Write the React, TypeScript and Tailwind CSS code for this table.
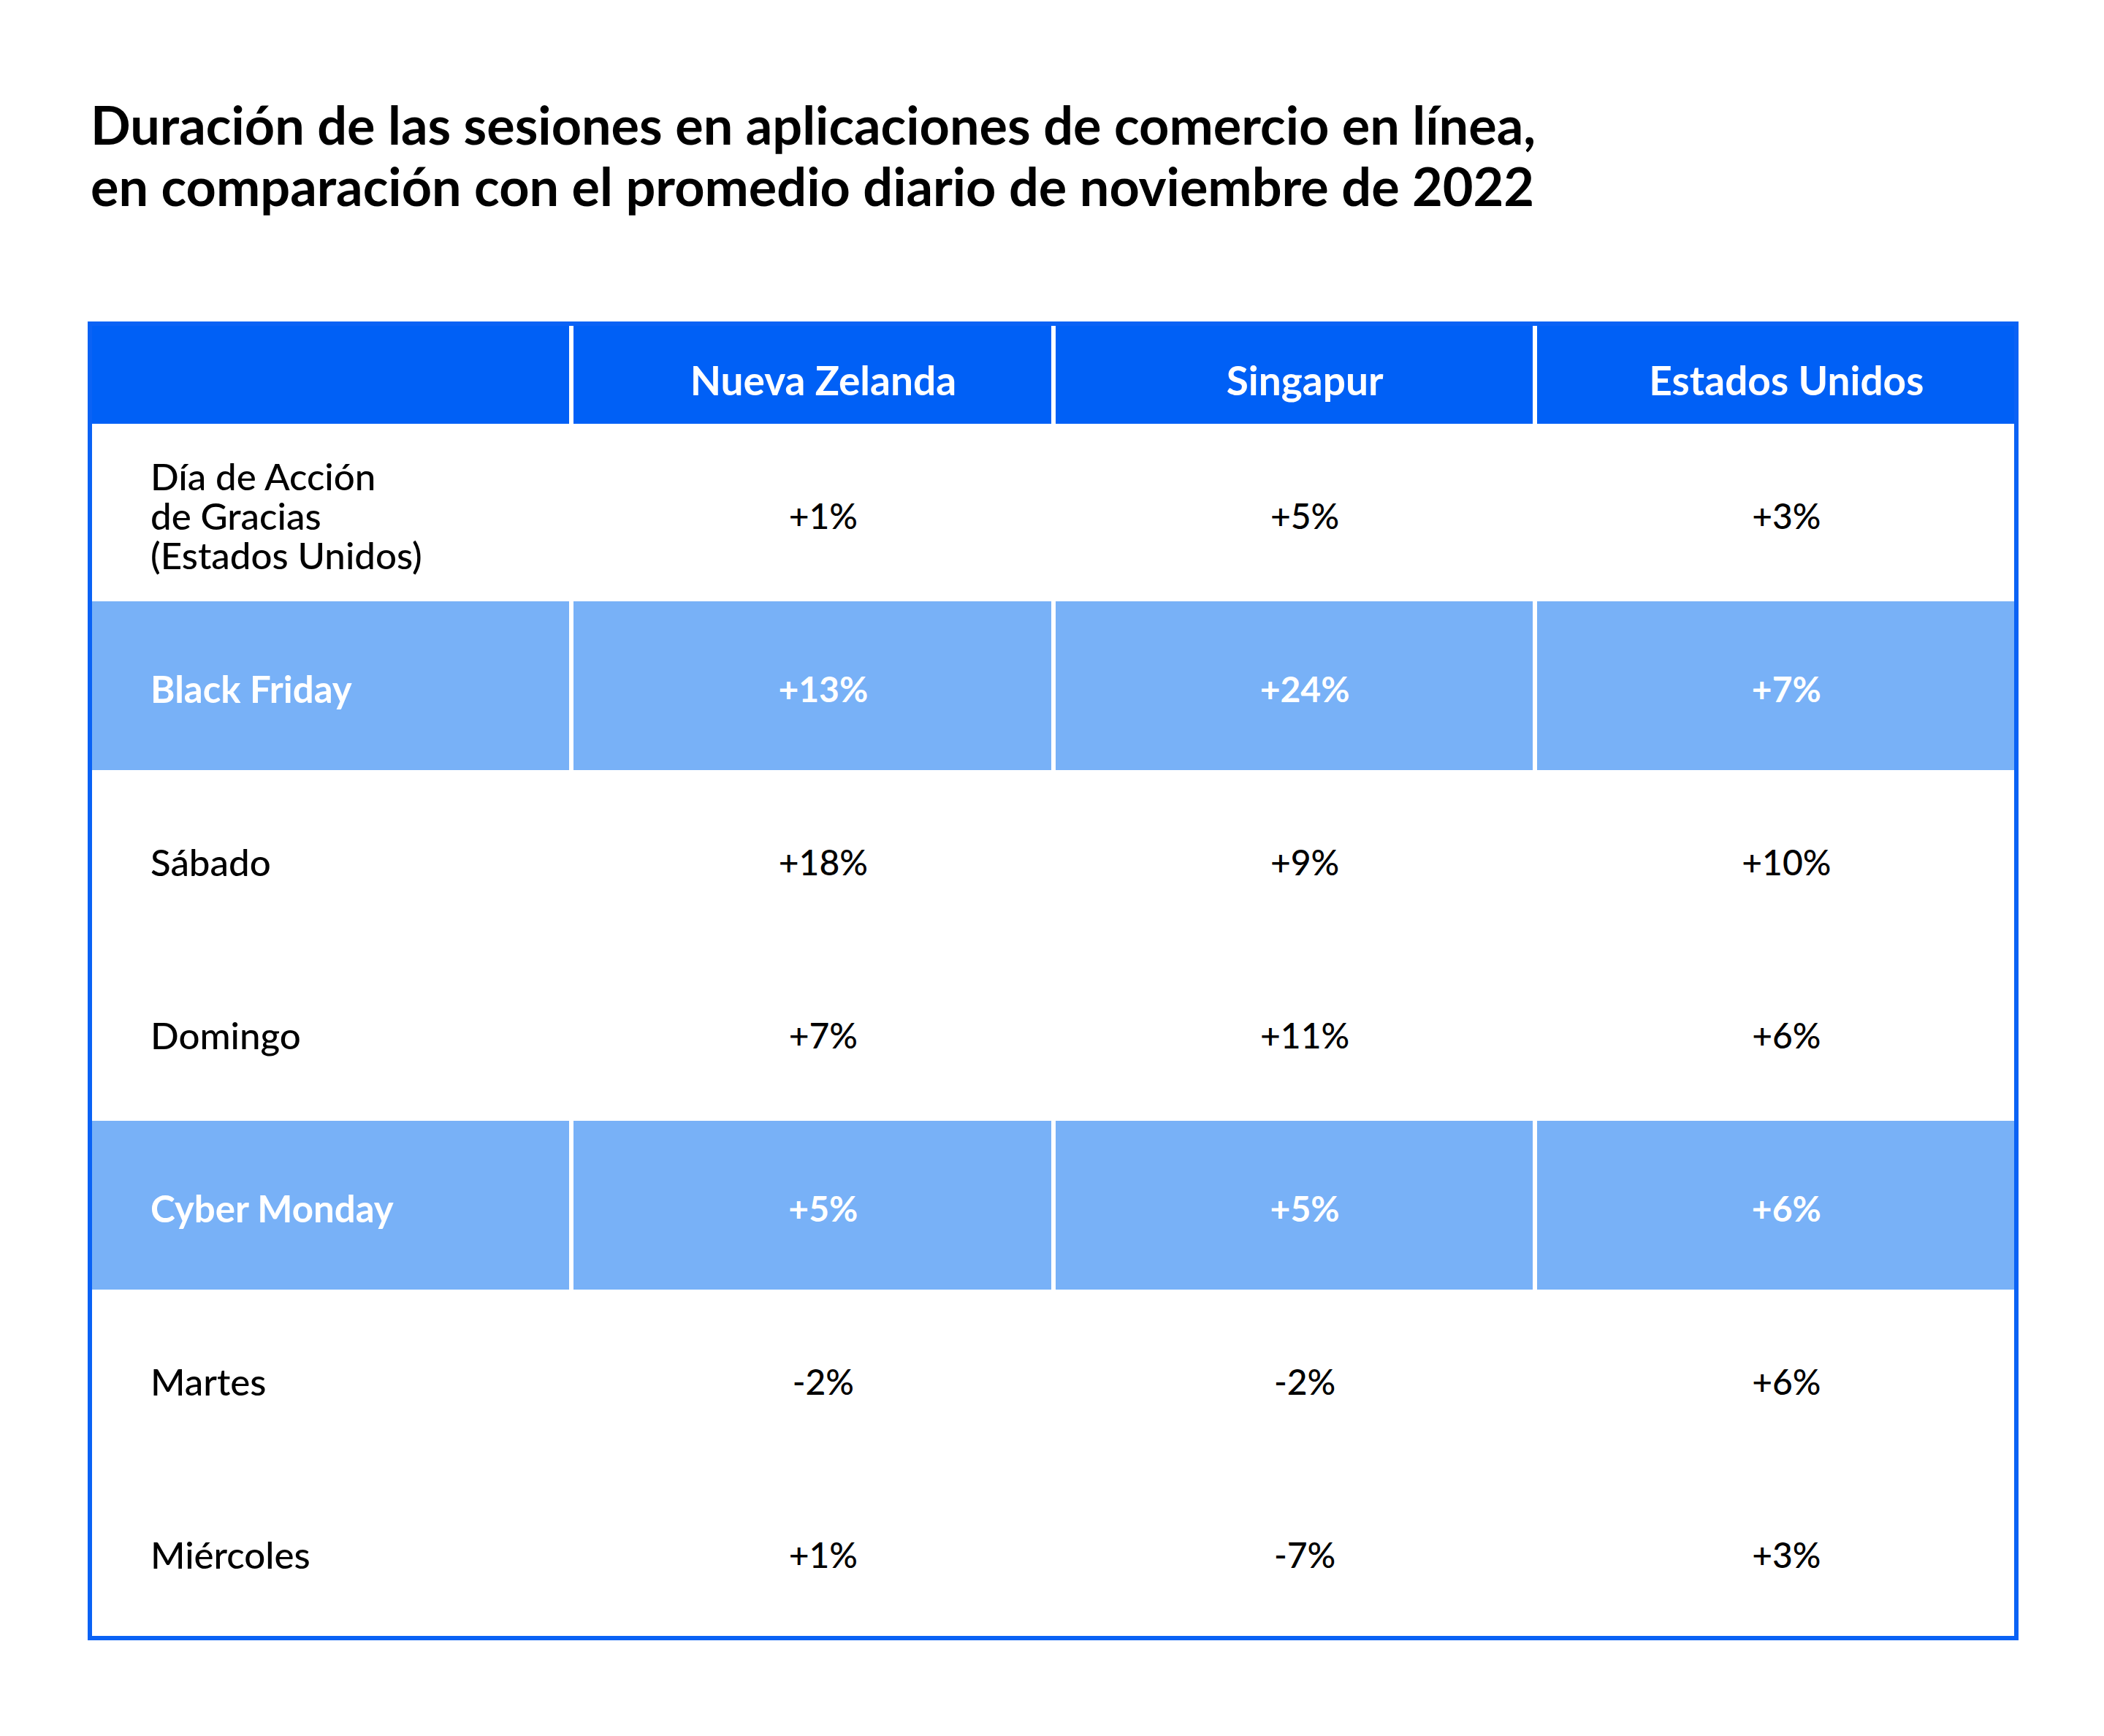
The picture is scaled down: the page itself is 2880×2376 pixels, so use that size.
import React from 'react';

type Row = { label: React.ReactNode; values: string[]; highlight?: boolean };

const rows: Row[] = [
    {
        label: (
            <>
                Día de Acción
                <br />
                de Gracias
                <br />
                (Estados Unidos)
            </>
        ),
        values: ['+1%', '+5%', '+3%'],
    },
    { label: 'Black Friday', values: ['+13%', '+24%', '+7%'], highlight: true },
    { label: 'Sábado', values: ['+18%', '+9%', '+10%'] },
    { label: 'Domingo', values: ['+7%', '+11%', '+6%'] },
    { label: 'Cyber Monday', values: ['+5%', '+5%', '+6%'], highlight: true },
    { label: 'Martes', values: ['-2%', '-2%', '+6%'] },
    { label: 'Miércoles', values: ['+1%', '-7%', '+3%'] },
];

const columns = ['Nueva Zelanda', 'Singapur', 'Estados Unidos'];

const App: React.FC = () => {
    return (
        <div className="w-[2880px] h-[2376px] bg-white text-black font-['Lato','Liberation_Sans',sans-serif] pl-[120px] pt-[128px]">
            {/* Title */}
            <h1 className="ml-[4px] text-[72px] leading-[84px] font-bold">
                Duración de las sesiones en aplicaciones de comercio en línea,
                <br />
                en comparación con el promedio diario de noviembre de 2022
            </h1>

            {/* Table */}
            <div className="mt-[144px] w-[2643px] border-[6px] border-[#0a62f5] bg-white">
                <div className="grid grid-cols-4 gap-[6px]">
                    {/* Header */}
                    <div className="h-[134px] bg-[#0060f6]" />
                    {columns.map((c) => (
                        <div
                            key={c}
                            className="h-[134px] bg-[#0060f6] flex items-center justify-center pl-[30px] pt-[14px] text-white text-[55px] font-bold"
                        >
                            {c}
                        </div>
                    ))}

                    {rows.map((r, i) => {
                        const bg = r.highlight ? 'bg-[#78b1f7] text-white font-bold' : 'bg-white text-black font-medium';
                        return (
                            <React.Fragment key={i}>
                                <div className={`${bg} h-[231px] flex items-center pl-[80px] pt-[8px] text-[51px] leading-[54px]`}>
                                    <div>{r.label}</div>
                                </div>
                                {r.values.map((v, j) => (
                                    <div
                                        key={j}
                                        className={`${bg} h-[231px] flex items-center justify-center pl-[30px] pt-[8px] text-[48px]`}
                                    >
                                        {v}
                                    </div>
                                ))}
                            </React.Fragment>
                        );
                    })}
                </div>
            </div>
        </div>
    );
};

export default App;
